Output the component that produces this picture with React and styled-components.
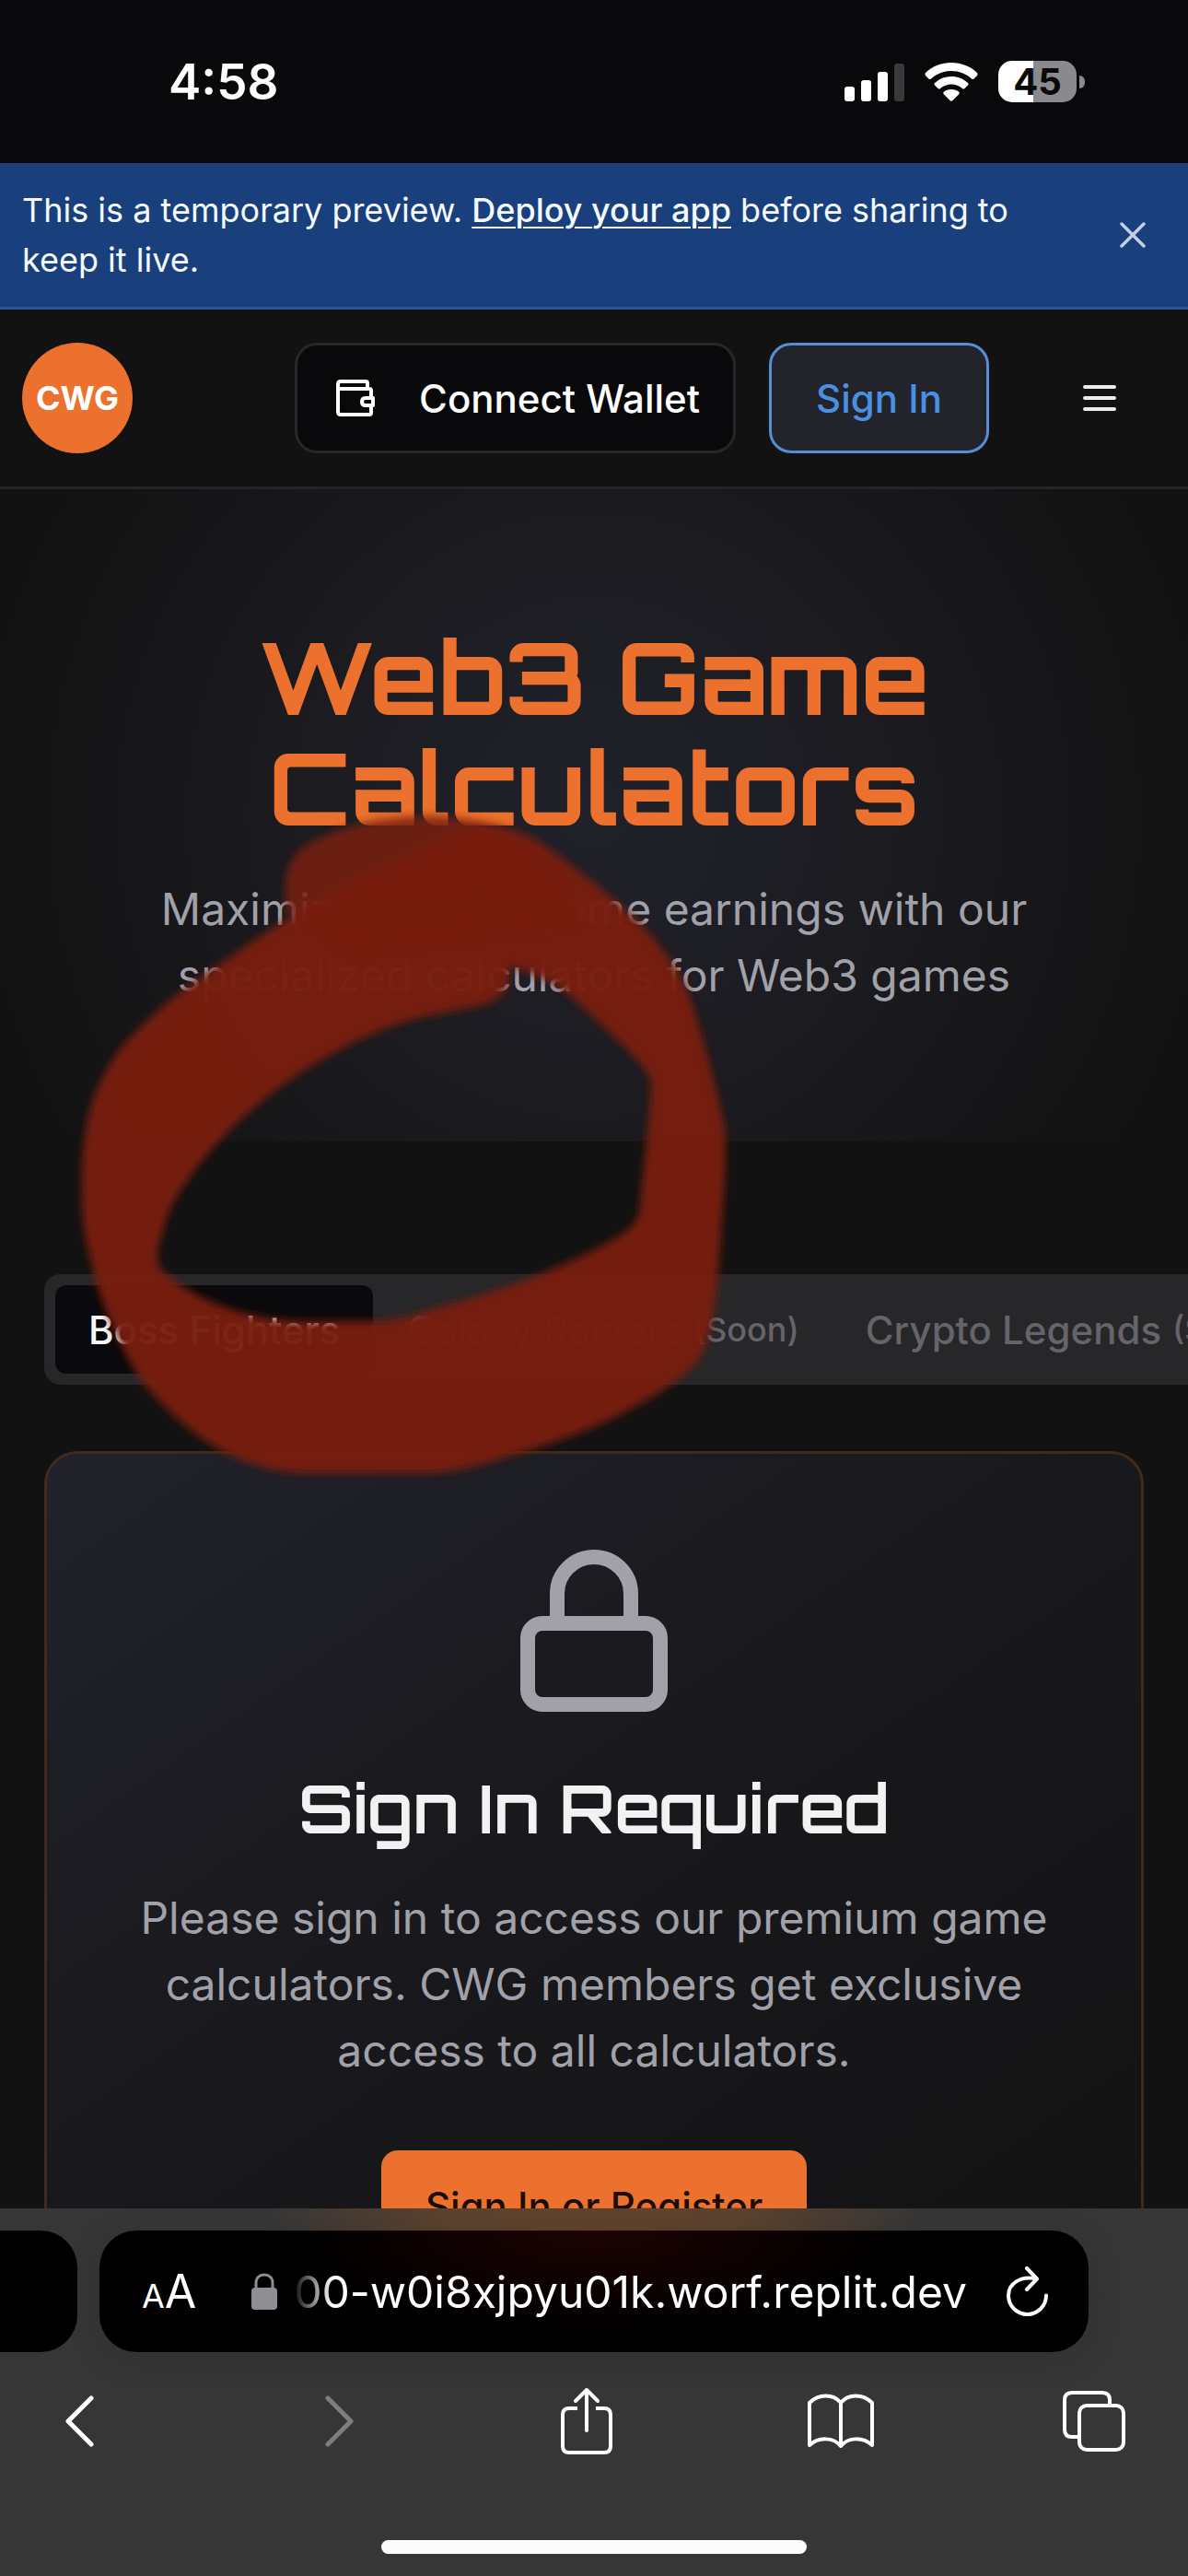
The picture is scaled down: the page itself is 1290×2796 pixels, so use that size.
import React from "react";
import styled, { createGlobalStyle, css } from "styled-components";
import { Lock } from "lucide-react";

const sans = `Inter, "Liberation Sans", sans-serif`;
const display = `Orbitron, "DejaVu Sans", sans-serif`;

const GlobalStyle = createGlobalStyle`
  *, *::before, *::after { box-sizing: border-box; }
  body { margin: 0; background: #121212; font-family: ${sans}; color: #fff; }
  button, input { font-family: inherit; }
  h1, h2, p { margin: 0; }
`;

const Screen = styled.div`
  height: 100vh;
  display: flex;
  flex-direction: column;
  overflow: hidden;
`;

/* Status bar */
const StatusBar = styled.header`
  flex: none;
  height: 177px;
  padding: 0 112px 0 183px;
  display: flex;
  align-items: center;
  justify-content: space-between;
  background: #09090b;
`;
const Clock = styled.time`
  font-size: 53px;
  font-weight: 600;
  line-height: 60px;
`;
const StatusIcons = styled.div`
  display: flex;
  align-items: center;
  gap: 22px;
`;
const BatteryGroup = styled.div`
  display: flex;
  align-items: center;
  gap: 3px;
`;
const Battery = styled.div`
  width: 85px;
  height: 45px;
  border-radius: 15px;
  background: linear-gradient(90deg, #fff 45%, #8a8a8c 45%);
  color: #09090b;
  font-size: 40px;
  font-weight: 700;
  line-height: 45px;
  text-align: center;
`;
const BatteryCap = styled.div`
  width: 6px;
  height: 14px;
  border-radius: 0 6px 6px 0;
  background: #8a8a8c;
`;

/* Preview banner */
const Banner = styled.aside`
  flex: none;
  display: flex;
  align-items: center;
  justify-content: space-between;
  padding: 24px 36px 24px 24px;
  background: #19407c;
  border-bottom: 3px solid #2b5590;
`;
const BannerText = styled.p`
  flex: 1;
  max-width: 1110px;
  font-size: 36px;
  line-height: 54px;
  color: #f5f9fc;
`;
const BannerLink = styled.a`
  color: inherit;
  font-weight: 500;
  text-decoration: underline;
  text-decoration-thickness: 2px;
  text-underline-offset: 5px;
`;
const IconButton = styled.button`
  display: flex;
  align-items: center;
  justify-content: center;
  width: ${(p) => p.$width || 48}px;
  height: ${(p) => p.$height || 48}px;
  padding: 0;
  border: 0;
  background: none;
  color: ${(p) => p.$color || "#fff"};
`;

/* Site header */
const Page = styled.div`
  position: relative;
  flex: 1;
  min-height: 0;
  overflow: hidden;
`;
const SiteHeader = styled.header`
  display: flex;
  align-items: center;
  justify-content: space-between;
  padding: 36px 24px;
  border-bottom: 3px solid #232329;
  background: #121212;
`;
const Logo = styled.a`
  display: flex;
  align-items: center;
  justify-content: center;
  width: 120px;
  height: 120px;
  border-radius: 50%;
  background: #ec712e;
  color: #fff;
  font-size: 36px;
  font-weight: 700;
  text-decoration: none;
`;
const HeaderActions = styled.div`
  display: flex;
  align-items: center;
  gap: 36px;
`;
const MenuButton = styled(IconButton)`
  margin-left: 12px;
`;
const ActionButton = styled.button`
  display: flex;
  align-items: center;
  justify-content: center;
  gap: 48px;
  height: 120px;
  padding: 0 ${(p) => p.$pad}px;
  border: 3px solid #27272a;
  border-radius: 24px;
  background: #09090b;
  color: #fff;
  font-size: 42px;
  font-weight: 500;
  white-space: nowrap;
  ${(p) =>
    p.$accent &&
    css`
      border-color: #568ed4;
      background: #23232b;
      color: #4a90e2;
    `}
`;

/* Hero */
const Hero = styled.section`
  display: flex;
  flex-direction: column;
  align-items: center;
  gap: 36px;
  padding: 144px 48px;
  text-align: center;
  background: radial-gradient(circle at center, #21212b 0, #1b1b20 320px, #121212 680px);
`;
const HeroTitle = styled.h1`
  max-width: 900px;
  font-family: ${display};
  font-size: 108px;
  font-weight: 700;
  line-height: 120px;
  color: #ec712e;
`;
const Lead = styled.p`
  max-width: ${(p) => p.$max}px;
  font-size: 48px;
  line-height: 72px;
  color: #a1a1aa;
`;

/* Calculators */
const Calculators = styled.main`
  display: flex;
  flex-direction: column;
  gap: 72px;
  padding: 144px 48px;
`;
const TabList = styled.div`
  display: flex;
  align-self: flex-start;
  padding: 12px;
  border-radius: 18px;
  background: #27272a;
`;
const Tab = styled.button`
  display: flex;
  align-items: center;
  gap: 12px;
  height: 96px;
  padding: 0 36px;
  border: 0;
  border-radius: 12px;
  background: ${(p) => (p.$active ? "#09090b" : "transparent")};
  color: ${(p) => (p.$active ? "#fafafa" : "#646469")};
  font-size: 42px;
  font-weight: 500;
  white-space: nowrap;
`;
const Soon = styled.span`
  font-size: 36px;
`;
const Card = styled.section`
  display: flex;
  flex-direction: column;
  align-items: center;
  padding: 96px 72px;
  border: 3px solid #40291d;
  border-radius: 36px;
  background: linear-gradient(145deg, #22222c 0%, #1a1a1f 35%, #121212 100%);
  text-align: center;
`;
const CardTitle = styled.h2`
  margin: 48px 0 36px;
  font-family: ${display};
  font-size: 72px;
  font-weight: 600;
  line-height: 96px;
  color: #f2f2f2;
`;
const PrimaryButton = styled.button`
  height: 120px;
  margin-top: 72px;
  padding: 0 48px;
  border: 0;
  border-radius: 18px;
  background: #ec712e;
  color: #1a0d05;
  font-size: 42px;
  font-weight: 500;
`;

/* Browser chrome */
const Chrome = styled.footer`
  flex: none;
  padding: 24px 0;
  background:
    radial-gradient(ellipse 360px 150px at 50% 0, #60432c 0, #5c422e 45%, rgba(92, 66, 46, 0) 100%),
    #363637;
`;
const AddressRow = styled.div`
  display: flex;
  gap: 24px;
`;
const PreviousTab = styled.div`
  flex: none;
  width: 84px;
  height: 132px;
  border-radius: 0 40px 40px 0;
  background: #000;
`;
const AddressBar = styled.div`
  flex: 1;
  min-width: 0;
  display: flex;
  align-items: center;
  height: 132px;
  margin-right: 108px;
  padding: 0 36px 0 46px;
  border-radius: 40px;
  background: radial-gradient(ellipse 330px 110px at 50% 0, #1e0303 0, #000 100%);
  box-shadow: 0 6px 36px rgba(0, 0, 0, 0.12);
`;
const TextSize = styled.button`
  display: flex;
  align-items: baseline;
  padding: 0;
  border: 0;
  background: none;
  color: #fff;
  font-size: 50px;
`;
const SmallA = styled.span`
  font-size: 36px;
`;
const LockWrap = styled.span`
  display: flex;
  margin: 0 16px 0 60px;
`;
const Address = styled.input`
  flex: 1;
  min-width: 0;
  height: 72px;
  padding: 0;
  border: 0;
  outline: 0;
  background: none;
  color: #fff;
  font-size: 48px;
  text-align: right;
  mask-image: linear-gradient(90deg, transparent, #000 44px);
`;
const Reload = styled(IconButton)`
  flex: none;
  margin-left: 36px;
`;
const Toolbar = styled.nav`
  display: flex;
  align-items: center;
  justify-content: space-between;
  height: 150px;
  padding: 0 57px 0 41px;
`;
const HomeIndicator = styled.div`
  width: 462px;
  height: 15px;
  margin: 54px auto 0;
  border-radius: 8px;
  background: #fcfcfc;
`;

/* Marker drawn over the page */
const Marker = styled.svg`
  position: absolute;
  top: 524px;
  left: 0;
  pointer-events: none;
`;

const SignalIcon = () => (
  <svg width="65" height="42" viewBox="0 0 65 42" fill="#fff" aria-hidden="true">
    <rect x="0" y="26" width="11" height="16" rx="3" />
    <rect x="18" y="19" width="11" height="23" rx="3" />
    <rect x="36" y="10" width="11" height="32" rx="3" />
    <rect x="54" y="1" width="11" height="41" rx="3" fill="#3a3a3c" />
  </svg>
);
const WifiIcon = () => (
  <svg width="58" height="42" viewBox="0 0 58 42" fill="#fff" aria-hidden="true">
    <path d="M29 0C18 0 8 4 1 11Q0 12.500 1 14L4.500 17.500Q5.500 18.500 7 17.500C13 12 20.500 9 29 9S45 12 51 17.500Q52.500 18.500 53.500 17.500L57 14Q58 12.500 57 11C50 4 40 0 29 0Z" />
    <path d="M29 15C22 15 16 17.500 11 22Q10 23 11 24.500L14.500 28Q16 29 17 28C20.500 25 24.500 23.500 29 23.500S37.500 25 41 28Q42 29 43.500 28L47 24.500Q48 23 47 22C42 17.500 36 15 29 15Z" />
    <path d="M29 29C25.500 29 23 30 21 31.500Q19.500 33 21 34.500L27.500 41Q29 42.500 30.500 41L37 34.500Q38.500 33 37 31.500C35 30 32.500 29 29 29Z" />
  </svg>
);
const CloseIcon = () => (
  <svg width="28" height="28" viewBox="0 0 28 28" stroke="currentColor" strokeWidth="3.500" strokeLinecap="round" aria-hidden="true">
    <path d="M2 2L26 26M26 2L2 26" />
  </svg>
);
const WalletIcon = () => (
  <svg width="48" height="40" viewBox="-6 0 48 40" fill="none" stroke="currentColor" strokeWidth="4" aria-hidden="true">
    <path d="M38 18V12Q38 10 36 10H4M34 10V4Q34 2 32 2H5Q2 2 2 5V35Q2 38 5 38H36Q38 38 38 36V30" />
    <path d="M40 20H32Q28 20 28 24T32 28H40Z" strokeLinejoin="round" />
  </svg>
);
const MenuIcon = () => (
  <svg width="36" height="28" viewBox="0 0 36 28" fill="#ededed" aria-hidden="true">
    <rect width="36" height="4" rx="2" />
    <rect y="12" width="36" height="4" rx="2" />
    <rect y="24" width="36" height="4" rx="2" />
  </svg>
);
const PadlockIcon = () => (
  <svg width="28" height="40" viewBox="0 0 28 40" aria-hidden="true">
    <path d="M5 18V11C5 5 9 2 14 2S23 5 23 11V18" fill="none" stroke="#8e8e93" strokeWidth="3" />
    <rect x="0" y="16" width="28" height="24" rx="4" fill="#8e8e93" />
  </svg>
);
const line = { fill: "none", stroke: "currentColor", strokeWidth: 4, strokeLinecap: "round", strokeLinejoin: "round", "aria-hidden": true };
const ReloadIcon = () => (
  <svg width="46" height="54" viewBox="0 0 46 54" {...line}>
    <path d="M22 2L33 13.500L22 25M32 13.500C16 10 2 18 2 31.500A20.500 20.500 0 0 0 43 31.500" />
  </svg>
);
const BackIcon = () => (
  <svg width="32" height="56" viewBox="0 0 32 56" {...line} strokeWidth="5">
    <path d="M29 3L4 28L29 53" />
  </svg>
);
const ForwardIcon = () => (
  <svg width="46" height="56" viewBox="-14 0 46 56" {...line} strokeWidth="5">
    <path d="M3 3L28 28L3 53" />
  </svg>
);
const ShareIcon = () => (
  <svg width="58" height="74" viewBox="0 0 58 74" {...line}>
    <path d="M19 23H10Q3 23 3 30V64Q3 71 10 71H48Q55 71 55 64V30Q55 23 48 23H39" strokeLinecap="butt" />
    <path d="M29 47V3M17 15L29 3L41 15" />
  </svg>
);
const BookIcon = () => (
  <svg width="72" height="60" viewBox="0 0 72 60" {...line}>
    <path d="M36 10C28 0 12 0 2 10V56C12 47 28 47 36 57C44 47 60 47 70 56V10C60 0 44 0 36 10V57" />
  </svg>
);
const TabsIcon = () => (
  <svg width="68" height="66" viewBox="0 0 68 66" {...line}>
    <path d="M16 50H10Q2 50 2 42V10Q2 2 10 2H43Q51 2 51 10V16" strokeLinecap="butt" />
    <rect x="18" y="16" width="48" height="48" rx="8" />
  </svg>
);

const MarkerLoop = () => (
  <Marker width="860" height="760" viewBox="0 860 860 760" aria-hidden="true">
    <defs>
      <filter id="soft" x="-5%" y="-5%" width="110%" height="110%">
        <feGaussianBlur stdDeviation="5" />
      </filter>
    </defs>
    <g filter="url(#soft)" fill="#781e10">
      <path
        opacity="0.86"
        d="M312 990C304 950 315 925 340 913C380 893 420 886 466 886C510 886 540 894 592 922L640 1010L380 1040Z"
      />
      <path
        fillRule="evenodd"
        opacity="0.97"
        d="M350 974C400 945 440 930 520 892C550 896 575 906 592 918C620 938 640 954 658 969C684 990 706 1012 719 1030C735 1050 745 1068 751 1088C766 1135 778 1180 787 1224C789 1260 787 1290 784 1320C782 1355 780 1390 776 1417C771 1450 765 1470 751 1485C730 1505 695 1525 658 1543C620 1560 585 1571 549 1582C515 1592 490 1599 466 1599H329C305 1598 285 1593 263 1585C235 1573 212 1558 192 1539C165 1515 146 1492 132 1461C115 1425 104 1398 99 1369C91 1340 89 1320 89 1296C88 1258 91 1228 99 1199C108 1173 120 1150 137 1131C158 1108 182 1086 208 1068C245 1042 275 1020 307 1001Z
        M173 1376C170 1362 171 1352 176 1340C181 1318 190 1298 203 1282C222 1254 248 1226 274 1204C300 1181 328 1162 357 1146C388 1128 420 1114 455 1105C482 1099 505 1096 527 1090C545 1084 554 1074 554 1048C575 1056 592 1062 609 1073C622 1083 635 1095 647 1107C666 1124 684 1141 699 1160C705 1167 707 1173 707 1180L702 1238L694 1316C692 1326 685 1333 675 1340C648 1357 617 1370 587 1383C550 1398 510 1410 472 1420C448 1428 428 1434 406 1434H329C308 1433 290 1431 274 1427C254 1423 236 1416 219 1408C204 1400 190 1392 181 1383Z"
      />
    </g>
  </Marker>
);

export default function App() {
  return (
    <Screen>
      <GlobalStyle />
      <StatusBar>
        <Clock>4:58</Clock>
        <StatusIcons>
          <SignalIcon />
          <WifiIcon />
          <BatteryGroup>
            <Battery>45</Battery>
            <BatteryCap />
          </BatteryGroup>
        </StatusIcons>
      </StatusBar>

      <Banner>
        <BannerText>
          This is a temporary preview. <BannerLink href="#deploy">Deploy your app</BannerLink> before sharing to keep it live.
        </BannerText>
        <IconButton aria-label="Close" $color="#c3d0e3">
          <CloseIcon />
        </IconButton>
      </Banner>

      <Page>
        <SiteHeader>
          <Logo href="#home">CWG</Logo>
          <HeaderActions>
            <ActionButton $pad={36}>
              <WalletIcon />
              Connect Wallet
            </ActionButton>
            <ActionButton $pad={48} $accent>
              Sign In
            </ActionButton>
            <MenuButton aria-label="Menu" $width={144} $height={120}>
              <MenuIcon />
            </MenuButton>
          </HeaderActions>
        </SiteHeader>

        <Hero>
          <HeroTitle>Web3 Game Calculators</HeroTitle>
          <Lead $max={960}>Maximize your in-game earnings with our specialized calculators for Web3 games</Lead>
        </Hero>

        <Calculators>
          <TabList role="tablist">
            <Tab role="tab" aria-selected="true" $active>
              Boss Fighters
            </Tab>
            <Tab role="tab" aria-selected="false">
              Galaxy Raiders <Soon>(Soon)</Soon>
            </Tab>
            <Tab role="tab" aria-selected="false">
              Crypto Legends <Soon>(Soon)</Soon>
            </Tab>
          </TabList>

          <Card>
            <Lock size={192} color="#a1a1aa" strokeWidth={2} aria-hidden="true" />
            <CardTitle>Sign In Required</CardTitle>
            <Lead $max={1044}>
              Please sign in to access our premium game calculators. CWG members get exclusive access to all calculators.
            </Lead>
            <PrimaryButton>Sign In or Register</PrimaryButton>
          </Card>
        </Calculators>
        <MarkerLoop />
      </Page>

      <Chrome>
        <AddressRow>
          <PreviousTab />
          <AddressBar>
            <TextSize aria-label="Text size">
              <SmallA>A</SmallA>A
            </TextSize>
            <LockWrap>
              <PadlockIcon />
            </LockWrap>
            <Address aria-label="Address" readOnly value="00-w0i8xjpyu01k.worf.replit.dev" />
            <Reload aria-label="Reload" $width={60} $height={72}>
              <ReloadIcon />
            </Reload>
          </AddressBar>
        </AddressRow>
        <Toolbar>
          <IconButton aria-label="Back" $width={90} $height={90}>
            <BackIcon />
          </IconButton>
          <IconButton aria-label="Forward" $width={90} $height={90} $color="#7e7e7f">
            <ForwardIcon />
          </IconButton>
          <IconButton aria-label="Share" $width={90} $height={90}>
            <ShareIcon />
          </IconButton>
          <IconButton aria-label="Bookmarks" $width={90} $height={90}>
            <BookIcon />
          </IconButton>
          <IconButton aria-label="Tabs" $width={90} $height={90}>
            <TabsIcon />
          </IconButton>
        </Toolbar>
        <HomeIndicator />
      </Chrome>
    </Screen>
  );
}
